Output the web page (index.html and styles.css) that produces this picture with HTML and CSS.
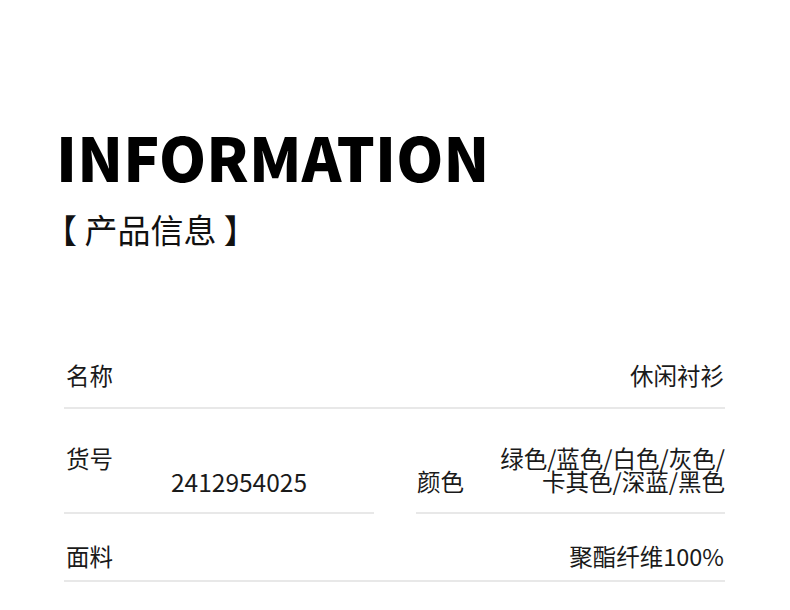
FILE: index.html
```html
<!DOCTYPE html>
<html lang="zh">
<head>
  <meta charset="UTF-8" />
  <title>产品信息</title>
  <link rel="stylesheet" href="styles.css">
</head>
<body>
  <header class="intro">
    <h1>INFORMATION</h1>
    <p class="subtitle">【 产品信息 】</p>
  </header>

  <section class="specs">
    <div class="row">
      <span class="label">名称</span>
      <span class="value">休闲衬衫</span>
    </div>

    <div class="row-split">
      <div class="cell cell-code">
        <span class="label">货号</span>
        <span class="value">2412954025</span>
      </div>
      <div class="cell cell-color">
        <span class="label">颜色</span>
        <span class="value">绿色/蓝色/白色/灰色/<br>卡其色/深蓝/黑色</span>
      </div>
    </div>

    <div class="row">
      <span class="label">面料</span>
      <span class="value">聚酯纤维100%</span>
    </div>
  </section>
</body>
</html>
```

FILE: styles.css
```css
body {
  margin: 0;
  background: #fff;
  color: #1a1a1a;
  font-family: "Noto Sans CJK SC", "Noto Sans", sans-serif;
}

.intro {
  padding: 122px 0 0 56px;
}

.intro h1 {
  margin: 0;
  font-size: 60px;
  font-weight: 900;
  line-height: 68px;
  color: #000;
  letter-spacing: 0.2px;
}

.subtitle {
  margin: 17px 0 0 -12px;
  font-size: 33px;
  line-height: 44px;
  color: #111;
}

.specs {
  margin: 113px 65px 0 64px;
  font-size: 23.5px;
  line-height: 23.5px;
}

.row {
  display: flex;
  justify-content: space-between;
  padding: 0 1px 19px 2px;
  border-bottom: 2px solid #e8e8e8;
}

.row:last-child {
  padding-top: 31px;
  padding-bottom: 12px;
}

.row-split {
  display: flex;
  gap: 42px;
  padding-top: 38px;
}

.cell {
  flex: 1;
  display: flex;
  padding-bottom: 18px;
  border-bottom: 2px solid #e8e8e8;
}

.cell-code {
  flex-direction: column;
  padding-left: 2px;
}

.cell-code .value {
  padding-left: 105px;
  font-size: 24.5px;
}

.cell-color {
  justify-content: space-between;
  align-items: flex-end;
  padding-left: 1px;
}

.cell-color .value {
  text-align: right;
}
```
